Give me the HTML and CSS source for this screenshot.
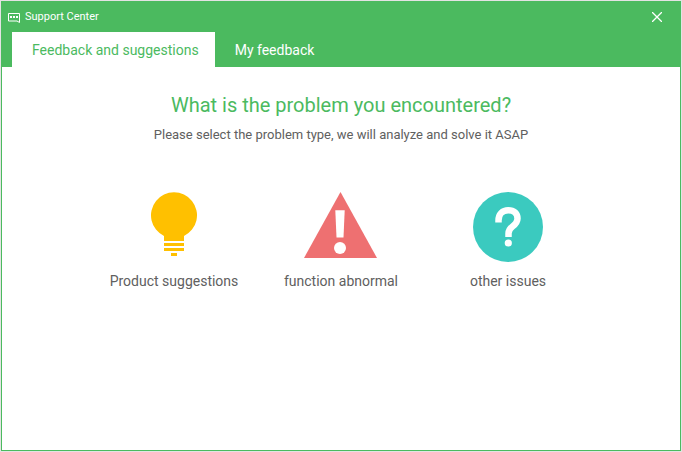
FILE: index.html
```html
<!DOCTYPE html>
<html lang="en">
<head>
<meta charset="utf-8">
<title>Support Center</title>
<link rel="stylesheet" href="styles.css">
</head>
<body>
<div class="window">
  <header class="header">
    <div class="titlebar">
      <svg class="logo" width="13" height="11" viewBox="0 0 13 11" aria-hidden="true">
        <path d="M.5 1.500h11v9l-2.500-1.500H.5z" fill="none" stroke="#fff"/>
        <path d="M2 4h2v2H2zM5 4h2v2H5zM8 4h2v2H8z" fill="#fff"/>
      </svg>
      <h1 class="title">Support Center</h1>
      <button class="close" type="button" aria-label="Close">
        <svg width="10" height="10" viewBox="0 0 10 10" aria-hidden="true">
          <path d="M0 0l10 10M10 0L0 10" stroke="#fff" stroke-width="1.300"/>
        </svg>
      </button>
    </div>
    <nav class="tabs">
      <button class="tab tab-active" type="button">Feedback and suggestions</button>
      <button class="tab" type="button">My feedback</button>
    </nav>
  </header>
  <main class="content">
    <h2 class="heading">What is the problem you encountered?</h2>
    <p class="hint">Please select the problem type, we will analyze and solve it ASAP</p>
    <div class="choices">
      <button class="choice" type="button">
        <svg width="46" height="70" viewBox="0 0 46 70" aria-hidden="true">
          <path d="M13 44A23 23 0 1 1 33 44V49H13z" fill="#ffc000"/>
          <path d="M13 51h20v3H13zM13 56h20v3H13zM20 61h6v3h-6z" fill="#ffc000"/>
        </svg>
        <span>Product suggestions</span>
      </button>
      <button class="choice" type="button">
        <svg width="74" height="70" viewBox="0 0 74 70" aria-hidden="true">
          <path d="M36.500 0L73 66H0z" fill="#ee7071"/>
          <path d="M31.300 18.300h9.400l-1.200 27.300h-7z" fill="#fff"/>
          <circle cx="36" cy="56" r="6" fill="#fff"/>
        </svg>
        <span>function abnormal</span>
      </button>
      <button class="choice" type="button">
        <svg width="70" height="70" viewBox="0 0 70 70" aria-hidden="true">
          <circle cx="35" cy="35" r="35" fill="#3bcabf"/>
          <path d="M25.500 30.500V28.500C25.500 22 29.500 18.300 35.300 18.300C41 18.300 44.500 21.500 44.500 26.500C44.500 30 43 31.800 39.500 34.500C36.500 36.800 35.500 38.500 35.500 41.500V45" fill="none" stroke="#fff" stroke-width="6.500"/>
          <circle cx="35.300" cy="51" r="3.600" fill="#fff"/>
        </svg>
        <span>other issues</span>
      </button>
    </div>
  </main>
</div>
</body>
</html>
```
FILE: styles.css
```css
* {
  box-sizing: border-box;
}

body {
  margin: 0;
  padding: 1px;
  min-height: 100vh;
  display: flex;
  background: #e3e3e3;
  color: #606060;
  font-family: Tahoma, Roboto, sans-serif;
}

button {
  margin: 0;
  padding: 0;
  border: 0;
  background: none;
  color: inherit;
  font: inherit;
  cursor: pointer;
}

svg {
  display: block;
}

.window {
  flex: 1;
  border: 1px solid #4bba5f;
  background: #fff;
}

.header {
  background: #4bba5f;
  color: #fff;
}

.titlebar {
  display: flex;
  align-items: center;
  height: 30px;
  padding: 0 18px 0 6px;
}

.logo {
  margin-right: 4px;
}

.title {
  flex: 1;
  margin: 0;
  font-size: 11px;
  line-height: 16px;
  font-weight: 400;
}

.tabs {
  display: flex;
  padding-left: 10px;
}

.tab {
  padding: 2px 16px 0 20px;
  font-size: 14px;
  line-height: 33px;
}

.tab-active {
  background: #fff;
  color: #4bba5f;
}

.content {
  display: flex;
  flex-direction: column;
  align-items: center;
  padding-top: 24px;
}

.heading {
  margin: 0;
  color: #4bba5f;
  font-size: 20px;
  line-height: 28px;
  font-weight: 400;
}

.hint {
  margin: 7px 0 0;
  font-size: 13px;
  line-height: 18px;
}

.choices {
  display: grid;
  grid-template-columns: repeat(3, 167px);
  margin-top: 48px;
}

.choice {
  display: flex;
  flex-direction: column;
  align-items: center;
  gap: 9px;
  font-size: 14px;
  line-height: 20px;
}
```
